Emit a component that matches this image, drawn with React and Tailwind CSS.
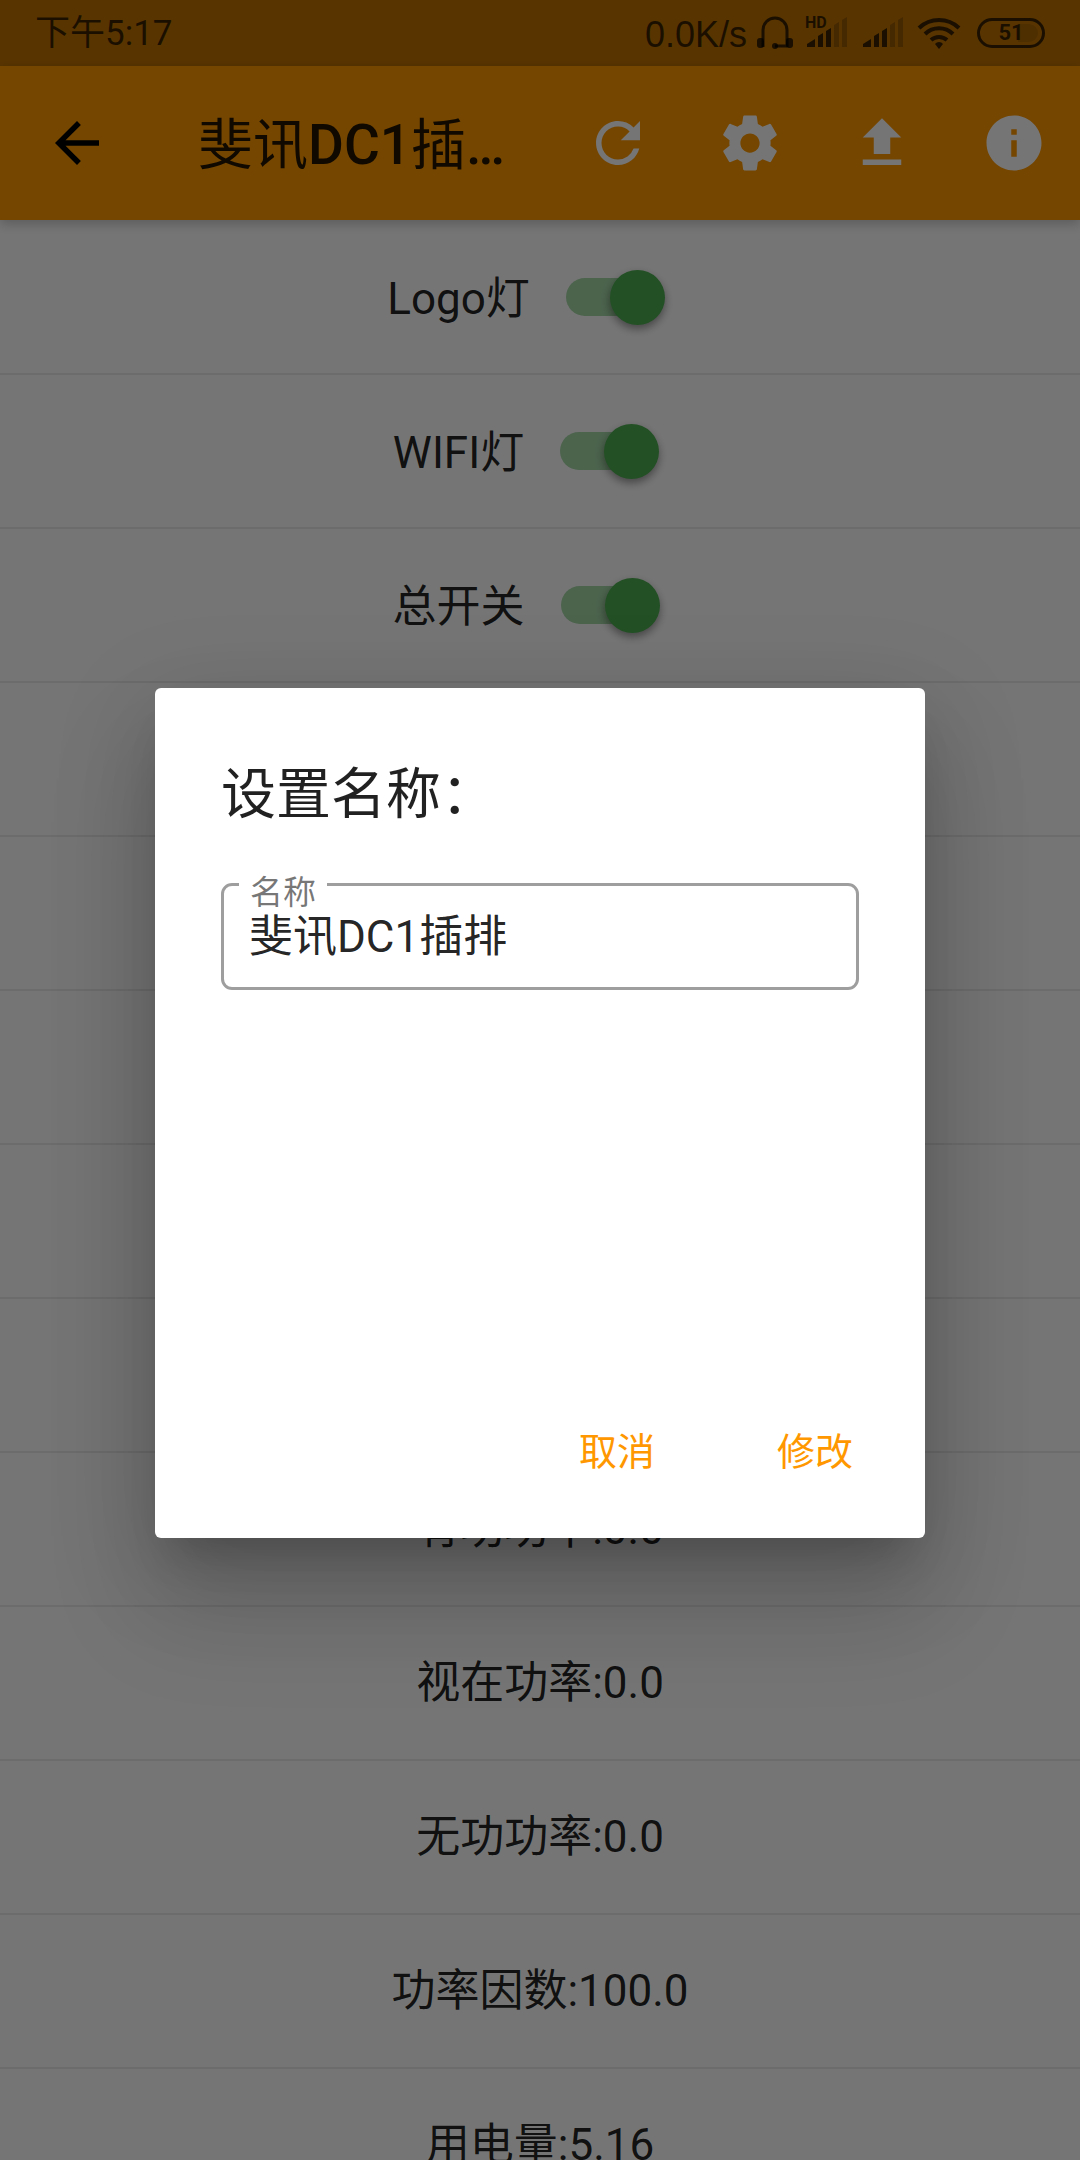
import { MdArrowBack, MdRefresh, MdFileUpload, MdInfo } from "react-icons/md";

const SWITCHES = ["Logo灯", "WIFI灯", "总开关"];
const BLANK_ROWS = [3, 4, 5, 6, 7];
const READINGS = [
  ["有功功率", "0.0"],
  ["视在功率", "0.0"],
  ["无功功率", "0.0"],
  ["功率因数", "100.0"],
  ["用电量", "5.16"],
];

function Gear({ className }) {
  return (
    <svg className={className} viewBox="0 0 24 24" fill="currentColor" aria-hidden="true">
      <path d="M19.43 12.98c.04-.32.07-.64.07-.98s-.03-.66-.07-.98l2.11-1.65c.19-.15.24-.42.12-.64l-2-3.46c-.12-.22-.39-.3-.61-.22l-2.49 1c-.52-.4-1.08-.73-1.69-.98l-.38-2.65C14.46 2.18 14.25 2 14 2h-4c-.25 0-.46.18-.49.42l-.38 2.65c-.61.25-1.17.59-1.69.98l-2.49-1c-.23-.09-.49 0-.61.22l-2 3.46c-.13.22-.07.49.12.64l2.11 1.65c-.04.32-.07.65-.07.98s.03.66.07.98l-2.11 1.65c-.19.15-.24.42-.12.64l2 3.46c.12.22.39.3.61.22l2.49-1c.52.4 1.08.73 1.69.98l.38 2.65c.03.24.24.42.49.42h4c.25 0 .46-.18.49-.42l.38-2.65c.61-.25 1.17-.59 1.69-.98l2.49 1c.23.09.49 0 .61-.22l2-3.46c.12-.22.07-.49-.12-.64l-2.11-1.65zM12 15.5c-1.93 0-3.5-1.57-3.5-3.5s1.57-3.5 3.5-3.5 3.5 1.57 3.5 3.5-1.57 3.5-3.5 3.5z" />
    </svg>
  );
}

function Signal({ hd }) {
  return (
    <svg className="h-11 w-11" viewBox="0 -6 44 44" fill="currentColor" aria-hidden="true">
      {hd && (
        <text x="0" y="11" fontSize="16" fontWeight="700" fontFamily="Roboto, sans-serif">
          HD
        </text>
      )}
      <path d="M2 30v-3l8-5v8z" />
      <path d="M13 30V19l5-3v14z" />
      <path d="M21 30V14l5-3v19z" />
      <path d="M29 30V8l5-3v25z" opacity=".3" />
      <path d="M37 30V3l5-3v30z" opacity=".3" />
    </svg>
  );
}

function Headphones() {
  return (
    <svg className="h-9 w-9" viewBox="0 0 36 36" aria-hidden="true">
      <path d="M6 32V15a12 12 0 0 1 24 0v17M18 31h12" fill="none" stroke="currentColor" strokeWidth="3" />
      <rect x="0" y="23" width="7" height="10" rx="3" fill="currentColor" />
      <rect x="29" y="23" width="7" height="10" rx="3" fill="currentColor" />
      <circle cx="18" cy="31" r="3" fill="currentColor" />
    </svg>
  );
}

function Wifi() {
  return (
    <svg className="h-8 w-11" viewBox="0 0 44 32" fill="none" stroke="currentColor" strokeWidth="4" aria-hidden="true">
      <path d="M2 11a29 29 0 0 1 40 0M8 17a20 20 0 0 1 28 0M14 23a12 12 0 0 1 16 0" />
      <path d="M18 27a5 5 0 0 1 8 0l-4 5z" fill="currentColor" stroke="none" />
    </svg>
  );
}

function StatusBar() {
  return (
    <div className="flex h-[66px] items-center justify-between bg-[#bf7200] pr-[35px] pl-[35px] text-[35px] text-black/70">
      <span className="pt-0.5">下午5:17</span>
      <div className="flex items-center">
        <span className="pt-1 font-['Liberation_Sans',sans-serif] text-4xl">0.0K/s</span>
        <span className="ml-2.5"><Headphones /></span>
        <span className="ml-3"><Signal hd /></span>
        <span className="ml-3"><Signal /></span>
        <span className="ml-3"><Wifi /></span>
        <span className="relative ml-4 flex h-[30px] w-[68px] items-center justify-center rounded-full border-[3px] border-current text-[22px] leading-6 font-bold">
          <span className="absolute right-1 h-[18px] w-5 rounded-r-full bg-black/10" />
          51
        </span>
      </div>
    </div>
  );
}

function AppBar() {
  const actions = [
    ["刷新", MdRefresh],
    ["设置", Gear],
    ["上传", MdFileUpload],
    ["信息", MdInfo],
  ];
  return (
    <header className="relative flex h-[154px] items-center bg-[#ff9800] shadow-[0_4px_11px_rgba(0,0,0,0.22)]">
      <button type="button" aria-label="返回" className="flex h-full w-[154px] shrink-0 items-center justify-center text-black">
        <MdArrowBack className="size-[66px]" />
      </button>
      <h1 className="ml-11 min-w-0 flex-1 truncate pt-1 text-[55px] leading-[80px] font-medium text-black/87">
        <span className="font-normal">斐讯</span>DC1<span className="font-normal">插排</span>
      </h1>
      <div className="ml-11 flex shrink-0">
        {actions.map(([name, Icon]) => (
          <button key={name} type="button" aria-label={name} className="flex h-[132px] w-[132px] items-center justify-center text-white">
            <Icon className="size-[66px]" />
          </button>
        ))}
      </div>
    </header>
  );
}

function SwitchRow({ name }) {
  return (
    <li className="flex h-[154px] items-center justify-center border-b-2 border-black/8">
      <label className="flex items-center">
        <span className="pt-1">{name}</span>
        <span className="relative mr-7 ml-9 flex h-[55px] w-[99px] items-center">
          <input type="checkbox" role="switch" defaultChecked className="absolute inset-0 appearance-none" />
          <span className="h-[38px] w-[91px] rounded-full bg-[#4caf50]/50" />
          <span className="absolute right-0 size-[55px] rounded-full bg-[#4caf50] shadow-[0_4px_8px_rgba(0,0,0,0.4)]" />
        </span>
      </label>
    </li>
  );
}

function RenameDialog() {
  return (
    <div className="absolute inset-0 flex items-center bg-black/54 px-[155px] pt-[66px]">
      <form
        role="dialog"
        aria-labelledby="dialog-title"
        className="flex w-full flex-col rounded-[6px] bg-white shadow-[0_30px_41px_-19px_rgba(0,0,0,0.2),0_66px_105px_8px_rgba(0,0,0,0.14),0_25px_100px_12px_rgba(0,0,0,0.1)]"
      >
        <h2 id="dialog-title" className="px-[66px] pt-[70px] text-[55px] leading-[72px] text-black/87">
          设置名称：
        </h2>
        <div className="min-h-[572px] px-[66px] pt-[53px]">
          <div className="relative">
            <label htmlFor="device-name" className="absolute -top-1.5 left-[18px] bg-white px-[11px] text-[33px] leading-8 text-black/54">
              名称
            </label>
            <input
              id="device-name"
              type="text"
              defaultValue="斐讯DC1插排"
              className="h-[107px] w-full rounded-[11px] border-3 border-[#9e9e9e] px-[25px] pb-2 text-[44px] text-black/87 outline-none"
            />
          </div>
        </div>
        <div className="flex justify-end gap-[22px] px-[22px] pb-9 text-[38px] text-[#ff9800]">
          <button type="button" className="h-[100px] w-[176px]">取消</button>
          <button type="submit" className="h-[100px] w-[176px]">修改</button>
        </div>
      </form>
    </div>
  );
}

export default function App() {
  return (
    <div className="relative h-screen overflow-hidden bg-white font-[Roboto,'Noto_Sans_CJK_SC',sans-serif]">
      <StatusBar />
      <AppBar />
      <ul className="pt-px text-[44px] text-black/87">
        {SWITCHES.map((name) => (
          <SwitchRow key={name} name={name} />
        ))}
        {BLANK_ROWS.map((row) => (
          <li key={row} className="h-[154px] border-b-2 border-black/8" />
        ))}
        {READINGS.map(([name, value]) => (
          <li key={name} className="flex h-[154px] items-center justify-center border-b-2 border-black/8">
            {name}:{value}
          </li>
        ))}
      </ul>
      <RenameDialog />
    </div>
  );
}
